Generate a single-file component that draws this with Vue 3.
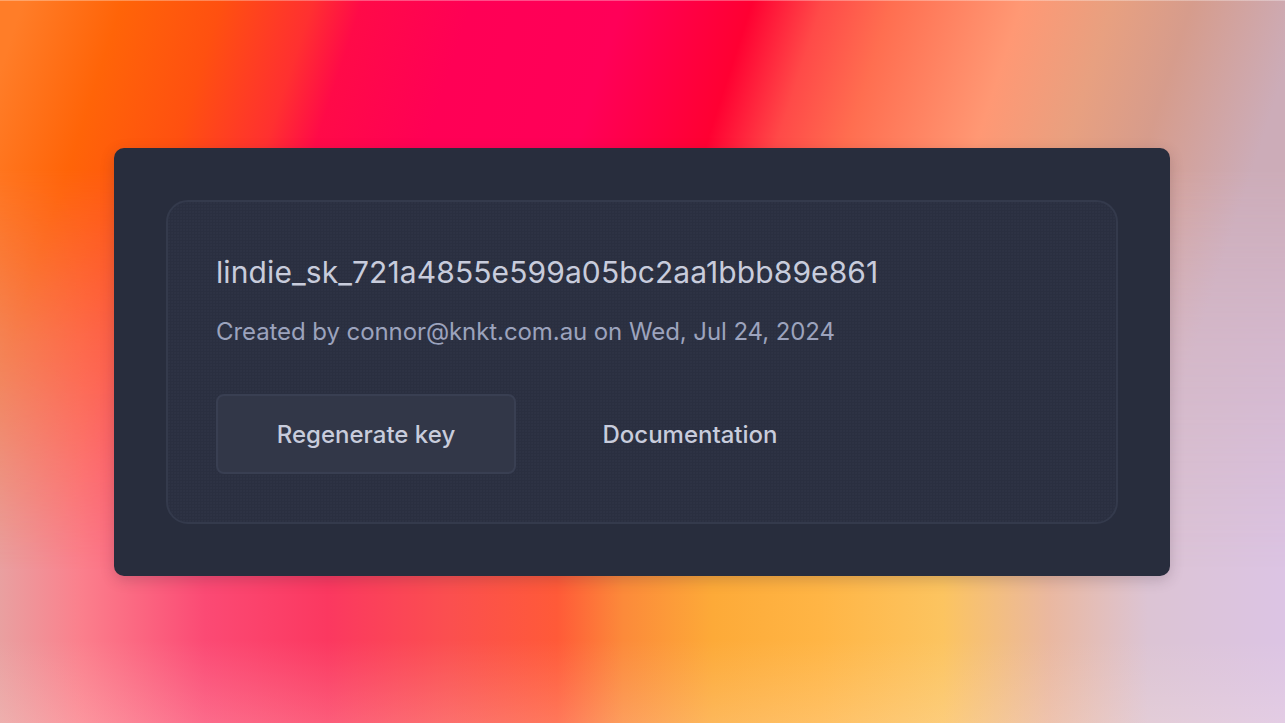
<script setup>
const title = 'lindie_sk_721a4855e599a05bc2aa1bbb89e861'
const meta = 'Created by connor@knkt.com.au on Wed, Jul 24, 2024'
</script>

<template>
  <main class="page">
    <section class="card">
      <div class="panel">
        <h1 class="key">{{ title }}</h1>
        <p class="meta">{{ meta }}</p>
        <div class="actions">
          <button class="btn primary">Regenerate key</button>
          <button class="btn ghost">Documentation</button>
        </div>
      </div>
    </section>
  </main>
</template>

<style>
html, body { margin: 0; overflow: hidden; }
</style>

<style scoped>
.page {
  position: relative;
  box-sizing: border-box;
  width: 100%;
  height: 723px;
  padding-right: 1px;
  display: flex;
  align-items: center;
  justify-content: center;
  font-family: Inter, "Liberation Sans", sans-serif;
  background:
    linear-gradient(to bottom, rgba(255,238,228,0) 640px, rgba(255,238,228,.2) 723px),
    linear-gradient(90deg,
      #e9a0a0 0px, #fb7f8c 82px, #fb4a74 205px, #fb3860 328px, #fb4f4f 450px,
      #ff5a38 557px, #fc8a3a 623px, #fdaa38 713px, #ffb545 820px, #fcc460 943px,
      #eab8a0 1049px, #dcc4d4 1148px, #dcc4e4 1285px);
}

.page::before {
  content: "";
  position: absolute;
  inset: 0;
  background:
    linear-gradient(to bottom, rgba(255,255,255,.3) 1px, rgba(255,255,255,0) 1px),
    linear-gradient(108deg,
      #ff7d28 22px, #ff6408 117px, #ff5010 212px, #ff3030 298px, #ff0a48 345px,
      #ff0055 450px, #ff0058 593px, #ff0032 716px, #ff4a48 783px, #ff6e50 849px,
      #ff9874 973px, #e8a080 1059px, #d69c8c 1135px, #ccacb8 1244px);
  -webkit-mask-image: linear-gradient(to bottom, #000 170px, rgba(0,0,0,.55) 330px, transparent 570px);
  mask-image: linear-gradient(to bottom, #000 170px, rgba(0,0,0,.55) 330px, transparent 570px);
}

.card {
  position: relative;
  box-sizing: border-box;
  width: 1056px;
  height: 428px;
  padding: 52px;
  border-radius: 10px;
  background: #282d3d;
  box-shadow: 0 4px 14px rgba(60, 40, 60, .22);
}

.panel {
  box-sizing: border-box;
  height: 100%;
  padding: 49px 48px 48px;
  border: 2px solid #343a4c;
  border-radius: 22px;
  background-color: #2a2f40;
  background-image: radial-gradient(circle at 1px 1px, rgba(70,78,100,.12) 0.7px, transparent 1px);
  background-size: 3px 3px;
}

.key {
  margin: 0;
  font-size: 30px;
  line-height: 42px;
  letter-spacing: .1px;
  font-weight: 400;
  color: #c8ccdc;
}

.meta {
  margin: 21px 0 0;
  font-size: 24px;
  line-height: 36px;
  letter-spacing: -.08px;
  font-weight: 400;
  color: #9ca3bd;
}

.actions {
  display: flex;
  align-items: center;
  margin-top: 44px;
}

.btn {
  box-sizing: border-box;
  height: 80px;
  margin: 0;
  padding: 2px 0 0;
  font-family: inherit;
  font-size: 24px;
  font-weight: 500;
  color: #c8ccdc;
  border-radius: 8px;
}

.primary {
  width: 300px;
  background: #323748;
  border: 2px solid #393f52;
}

.ghost {
  width: 348px;
  background: none;
  border: 0;
}
</style>
